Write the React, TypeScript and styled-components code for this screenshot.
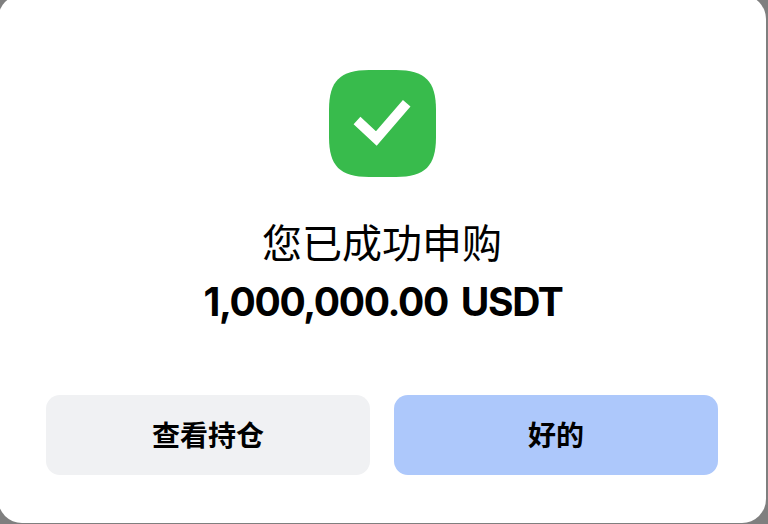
import React from "react";
import styled, { createGlobalStyle } from "styled-components";

const Global = createGlobalStyle`
  html, body { margin: 0; padding: 0; width: 768px; height: 524px; overflow: hidden; background: #7f7f7f; }
  * { box-sizing: border-box; }
`;

const Dialog = styled.div`
  width: 768px;
  height: 528px;
  margin: -5px 0 0 -2px;
  background: #fff;
  border-radius: 24px;
  display: flex;
  flex-direction: column;
  align-items: center;
  padding: 75px 48px 0;
  font-family: Inter, "Noto Sans CJK SC", sans-serif;
  color: #000;
`;

const Badge = styled.svg`
  width: 107px;
  height: 107px;
  display: block;
`;

const Title = styled.div`
  margin-top: 41px;
  font-size: 40px;
  line-height: 52px;
  font-weight: 400;
`;

const Amount = styled.div`
  margin-top: 6px;
  margin-left: 2px;
  font-size: 39px;
  letter-spacing: -1.35px;
  word-spacing: 5px;
  line-height: 52px;
  font-weight: 700;
`;

const Actions = styled.div`
  margin-top: 67px;
  width: 100%;
  display: grid;
  grid-template-columns: 324px 324px;
  justify-content: space-between;
`;

const ActionButton = styled.button<{ $primary?: boolean }>`
  height: 80px;
  border: 0;
  border-radius: 14px;
  background: ${(p) => (p.$primary ? "#adc8fb" : "#f0f1f3")};
  font: 600 28px "Noto Sans CJK SC", sans-serif;
  color: #000;
  padding: 0 0 3px;
`;

export default function App() {
  return (
    <>
      <Global />
      <Dialog>
        <Badge viewBox="0 0 107 107" aria-hidden="true">
          <path
            d="M40 0H67C96 0 107 11 107 40V67C107 96 96 107 67 107H40C11 107 0 96 0 67V40C0 11 11 0 40 0Z"
            fill="#38bb4c"
          />
          <path d="M28 50.5 47.3 68.5 77.7 33.3" fill="none" stroke="#fff" strokeWidth="10" strokeLinejoin="miter" />
        </Badge>
        <Title>您已成功申购</Title>
        <Amount>1,000,000.00 USDT</Amount>
        <Actions>
          <ActionButton>查看持仓</ActionButton>
          <ActionButton $primary>好的</ActionButton>
        </Actions>
      </Dialog>
    </>
  );
}
